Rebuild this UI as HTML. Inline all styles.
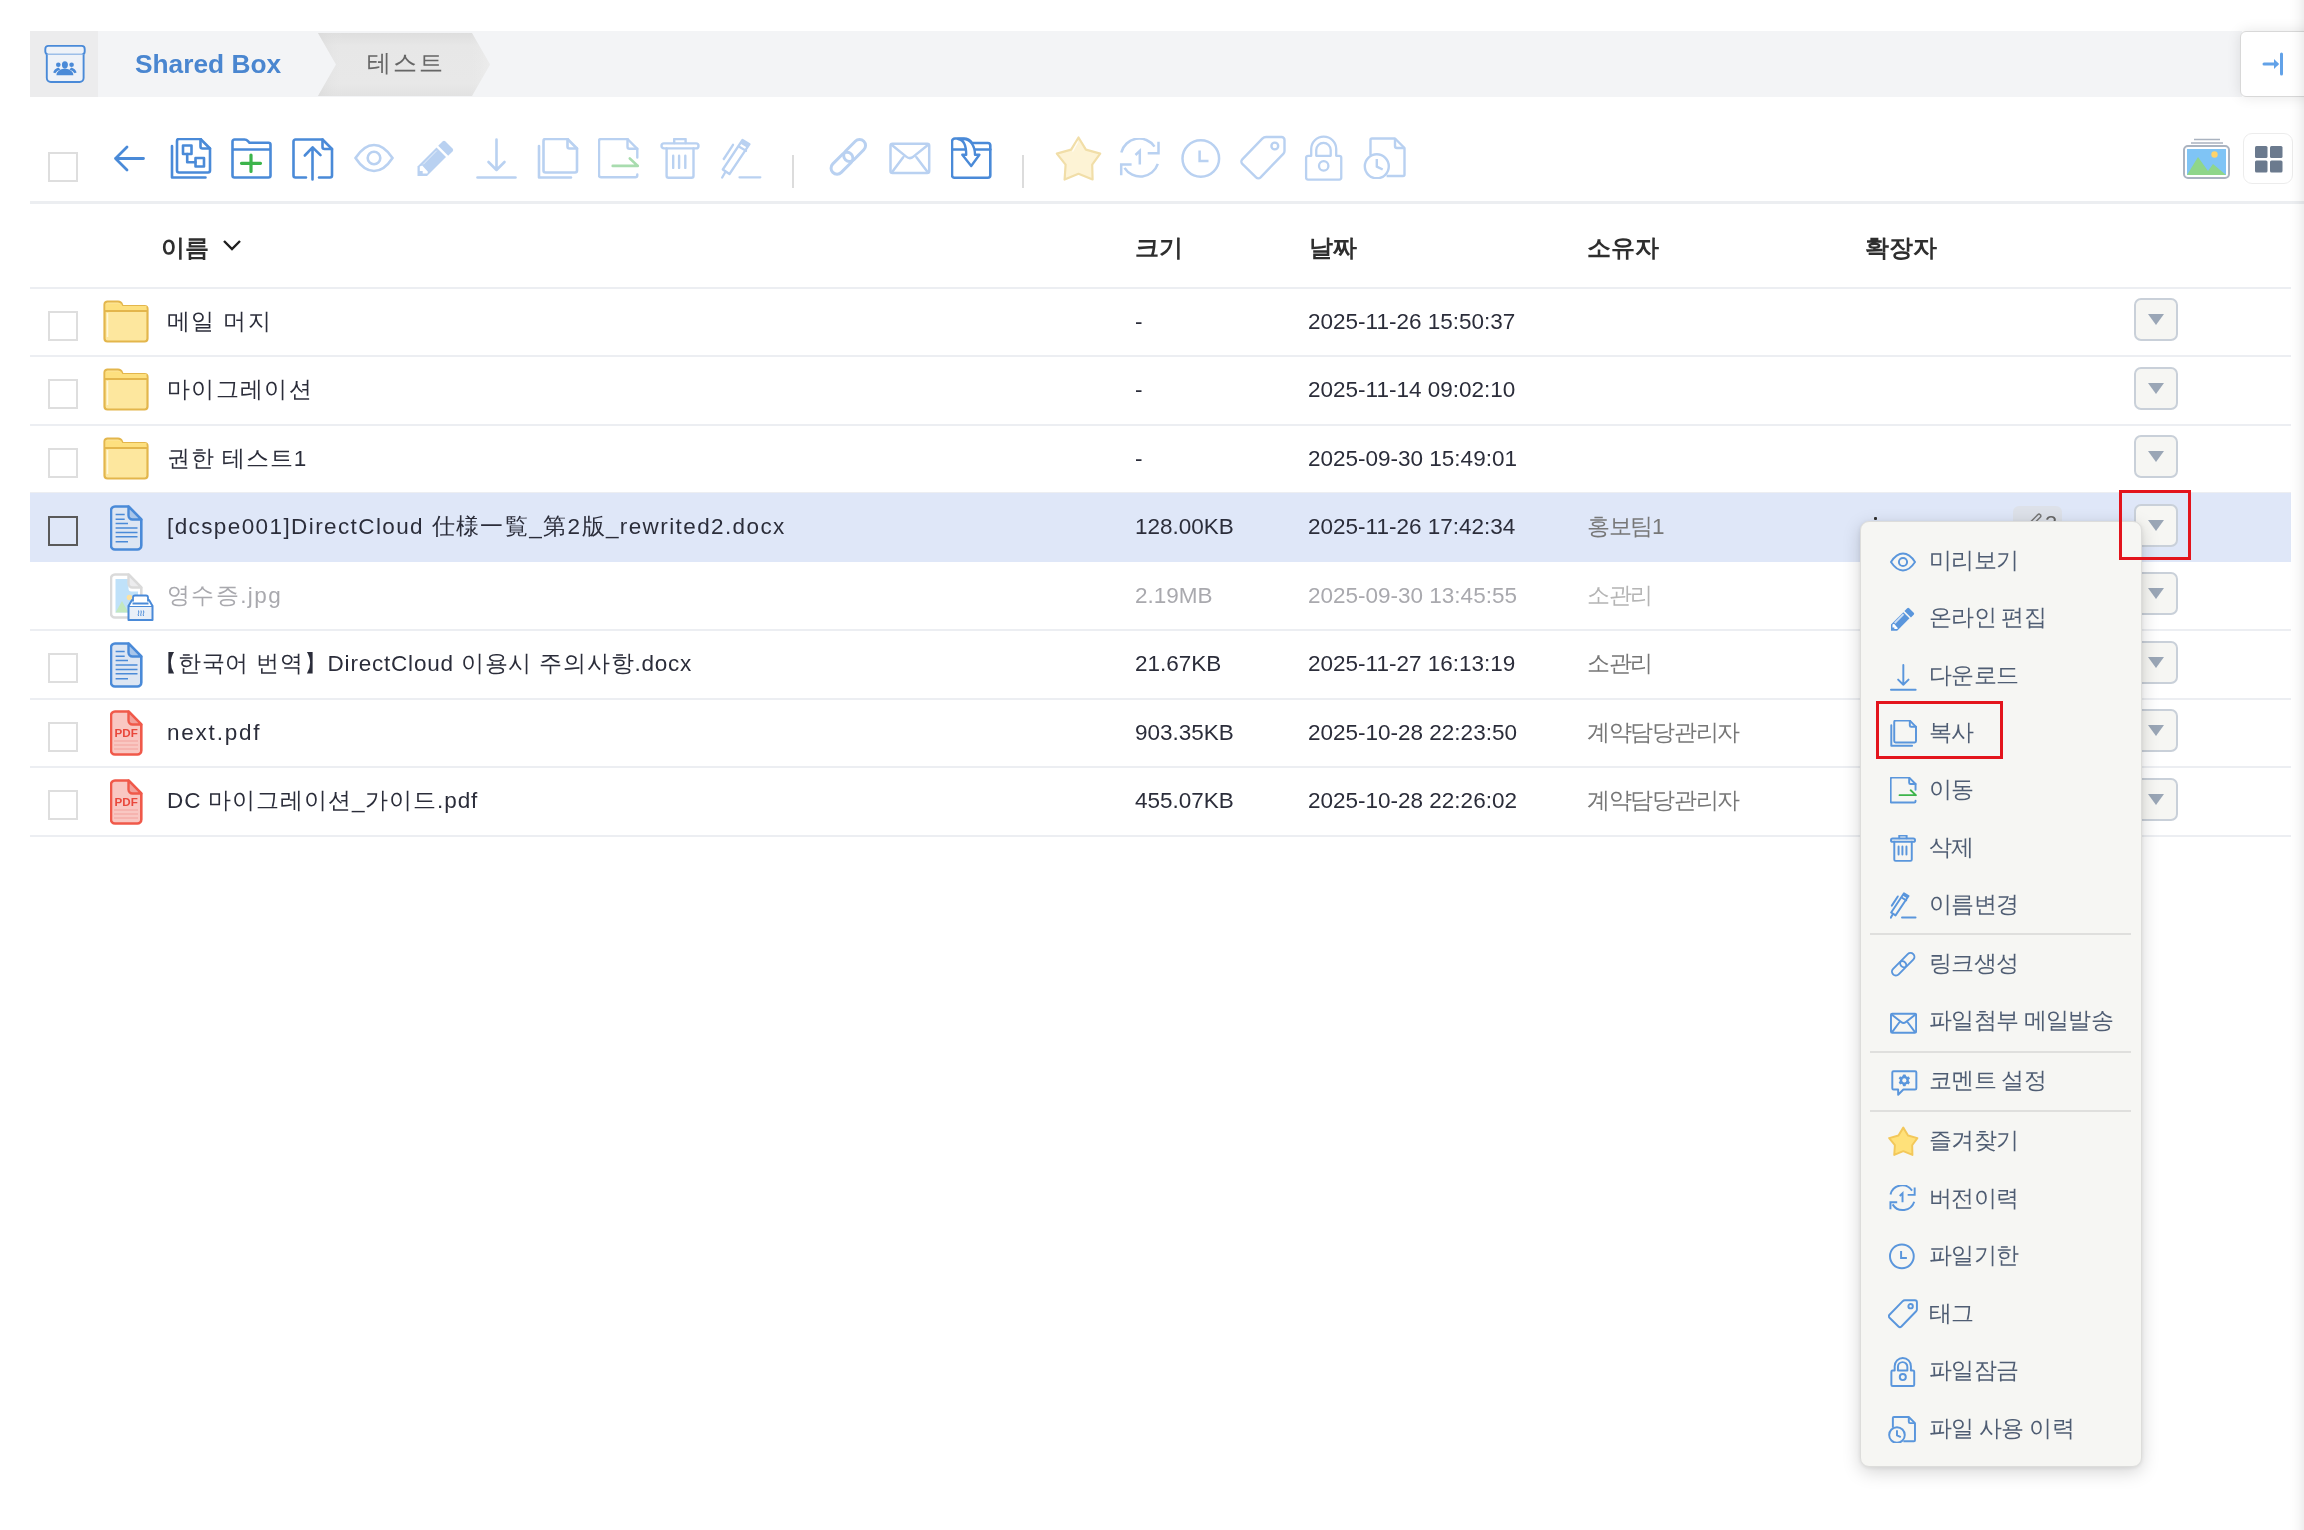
<!DOCTYPE html>
<html><head><meta charset="utf-8">
<style>
html,body{margin:0;padding:0;}
body{width:2304px;height:1530px;position:relative;overflow:hidden;background:#fff;font-family:"Liberation Sans",sans-serif;color:#2b2d3a;}
.a{position:absolute;}
#wrap{position:absolute;left:0;top:0;width:2304px;height:1530px;will-change:transform;}
.t{position:absolute;white-space:nowrap;font-size:22.5px;line-height:30px;}
.rowline{position:absolute;left:30px;width:2261px;height:2px;background:#eceef2;}
.cb{position:absolute;width:26px;height:26px;border:2px solid #dedede;background:#fff;}
.dd{position:absolute;left:2134px;width:40px;height:39px;border:2px solid #c9d0d9;border-radius:7px;background:#f6f6f3;}
.dd::after{content:"";position:absolute;left:12px;top:14px;border-left:8px solid transparent;border-right:8px solid transparent;border-top:11px solid #9aa6b6;}
.mt{position:absolute;left:1929px;font-size:22.5px;line-height:30px;color:#4f5d73;white-space:nowrap;letter-spacing:-0.7px;}
.sep{position:absolute;left:1870px;width:261px;height:2px;background:#dfdfdd;}
.mi [stroke-width]{stroke-width:3px;}
.mi .thin{stroke-width:1.2px;}
.red{position:absolute;border:3.5px solid #e3141c;box-sizing:border-box;}
</style></head>
<body><div id="wrap">
<div class="a" style="left:30px;top:31px;width:2212px;height:66px;background:#f3f4f6"></div>
<div class="a" style="left:30px;top:31px;width:68px;height:66px;background:#ececed"></div>
<svg class="a" style="left:44px;top:44px" width="42" height="40" viewBox="0 0 42 40"><rect x="1.3" y="1.9" width="39.4" height="8.7" rx="3" fill="#eef2f8" stroke="#4a8ad8" stroke-width="1.9"/><path d="M2.8 10.6V34a4 4 0 0 0 4 4H35.6a4 4 0 0 0 4-4V10.6" fill="#eef2f8" stroke="#4a8ad8" stroke-width="1.9"/><ellipse cx="20.9" cy="20.8" rx="3" ry="3.6" fill="#4a8ad8"/><path d="M12.4 31.2Q12.8 25.3 20.9 24.4Q29 25.3 29.4 31.2Z" fill="#4a8ad8"/><circle cx="14.3" cy="20.8" r="2.3" fill="#4a8ad8"/><circle cx="27.6" cy="20.8" r="2.3" fill="#4a8ad8"/><path d="M9.2 28.6Q10 25.2 14.3 23.6L16.5 25.4Q12.8 26.5 11.3 29.2Z M32.6 28.6Q31.8 25.2 27.5 23.6L25.3 25.4Q29 26.5 30.5 29.2Z" fill="#4a8ad8"/></svg>
<div class="t" style="left:135px;top:49px;font-size:26.3px;font-weight:bold;color:#4a86d0">Shared Box</div>
<svg class="a" style="left:318px;top:32.5px" width="174" height="63" viewBox="0 0 174 63"><defs><linearGradient id="bcg" x1="0" y1="0" x2="0" y2="1"><stop offset="0" stop-color="#dedede"/><stop offset="0.2" stop-color="#e7e7e7"/><stop offset="0.8" stop-color="#e8e8e8"/><stop offset="1" stop-color="#e2e2e2"/></linearGradient><linearGradient id="bcg2" x1="0" y1="0" x2="1" y2="0"><stop offset="0" stop-color="#d8d8d8" stop-opacity="0.6"/><stop offset="0.15" stop-color="#e8e8e8" stop-opacity="0"/><stop offset="0.88" stop-color="#e8e8e8" stop-opacity="0"/><stop offset="1" stop-color="#f0f0f0" stop-opacity="0.6"/></linearGradient></defs><path d="M0 0H154L172 31.5L154 63H0L18 31.5Z" fill="url(#bcg)"/><path d="M0 0H154L172 31.5L154 63H0L18 31.5Z" fill="url(#bcg2)"/></svg>
<div class="t" style="left:367px;top:48px;color:#666;font-size:24px;letter-spacing:2px">테스트</div>
<div class="a" style="left:2240px;top:31px;width:80px;height:64px;background:#fff;border:1px solid #d8d8d8;border-radius:6px;box-shadow:0 0 14px rgba(0,0,0,0.10)"></div>
<svg class="a" style="left:2262px;top:52px" width="24" height="24" viewBox="0 0 24 24"><path d="M2 12H15" stroke="#62a2e8" stroke-width="3" stroke-linecap="round"/><path d="M12 7L17 12L12 17Z" fill="#62a2e8"/><path d="M19.5 2V22" stroke="#62a2e8" stroke-width="3" stroke-linecap="round"/></svg>
<div class="cb" style="left:48px;top:152px"></div>
<svg class="a" style="left:112px;top:138px" width="40" height="40" viewBox="0 0 40 40"><g fill="none" stroke="#4a8ad8" stroke-width="2.8" stroke-linecap="round" stroke-linejoin="round"><path d="M3.5 20.5H31.5M15 9L3.5 20.5L15 32"/></g></svg>
<svg class="a" style="left:170px;top:138px" width="42" height="42" viewBox="0 0 42 42"><g fill="none" stroke="#4a8ad8" stroke-width="2.6" stroke-linejoin="round" stroke-linecap="round"><path d="M2 8V39.5H35.5"/><path d="M9 1H30.5L40 10.5V32.5a2 2 0 0 1-2 2H9a2 2 0 0 1-2-2V3a2 2 0 0 1 2-2Z"/><path d="M30.5 1V8.5a2 2 0 0 0 2 2H40"/><rect x="13" y="7.5" width="8.5" height="8.5"/><rect x="25.5" y="20" width="8.5" height="8.5"/><path d="M17.2 16V24.2H25.5"/></g></svg>
<svg class="a" style="left:231px;top:138px" width="42" height="42" viewBox="0 0 42 42"><g fill="none" stroke="#4a8ad8" stroke-width="2.6" stroke-linejoin="round"><path d="M3.5 1.5H13.5Q15.5 1.5 17 3.2L18.5 4.8H37.5a2 2 0 0 1 2 2V37.5a2 2 0 0 1-2 2H3.5a2 2 0 0 1-2-2V3.5a2 2 0 0 1 2-2Z"/><path d="M1.5 11.5H39.5"/></g><path d="M20 17V33.5M10.5 25.3H29.5" stroke="#3cb44b" stroke-width="3.2" stroke-linecap="round"/></svg>
<svg class="a" style="left:292px;top:138px" width="42" height="44" viewBox="0 0 42 44"><g fill="none" stroke="#4a8ad8" stroke-width="2.6" stroke-linejoin="round" stroke-linecap="round"><path d="M14 39.5H3.5a2 2 0 0 1-2-2V3.5a2 2 0 0 1 2-2H30.5L40 11V37.5a2 2 0 0 1-2 2H27"/><path d="M30.5 1.5V9a2 2 0 0 0 2 2H40"/><path d="M20.5 41.5V10M12.8 17.5L20.6 9.3L28.5 17.2"/></g></svg>
<svg class="a" style="left:354px;top:138px" width="40" height="40" viewBox="0 0 40 40"><g fill="none" stroke="#b9d1f1" stroke-width="2.6"><path d="M1.5 20C8 10 14 7 20 7S32 10 38.5 20C32 30 26 33 20 33S8 30 1.5 20Z"/><circle cx="20" cy="20" r="6.3"/></g></svg>
<svg class="a" style="left:416px;top:138px" width="40" height="40" viewBox="0 0 40 40"><path d="M1.5 28.5L20.5 9.5L30 19L11 38H1.5Z" fill="#b9d1f1"/><path d="M22.2 7.8L26.5 3.5Q28 2 29.5 3.5L36.5 10.5Q38 12 36.5 13.5L32.2 17.8Z" fill="#b9d1f1"/><path d="M3.8 28.5L6.2 27.4L11.9 33.7L11.4 35.5H6.7V33.1H3.8Z" fill="#fff"/><path d="M7.2 26.4L20.8 12.6" stroke="#fff" stroke-width="0.9" opacity="0.7"/></svg>
<svg class="a" style="left:476px;top:138px" width="42" height="42" viewBox="0 0 42 42"><g fill="none" stroke="#b9d1f1" stroke-width="2.6" stroke-linecap="round" stroke-linejoin="round"><path d="M20.5 1.5V32M12.5 24L20.5 32L28.5 24"/><path d="M1.5 39.5H39.5"/></g></svg>
<svg class="a" style="left:537px;top:138px" width="42" height="42" viewBox="0 0 42 42"><g fill="none" stroke="#b9d1f1" stroke-width="2.6" stroke-linejoin="round" stroke-linecap="round"><path d="M2 8V39.5H34"/><path d="M8.5 1H30.5L40 10.5V32.5a2 2 0 0 1-2 2H8.5a2 2 0 0 1-2-2V3a2 2 0 0 1 2-2Z"/><path d="M30.5 1V8.5a2 2 0 0 0 2 2H40"/></g></svg>
<svg class="a" style="left:598px;top:138px" width="42" height="42" viewBox="0 0 42 42"><g fill="none" stroke="#b9d1f1" stroke-width="2.4" stroke-linejoin="round" stroke-linecap="round"><path d="M39.3 19.5V10.8L29.5 1H3a2 2 0 0 0-2 2V37.3a2 2 0 0 0 2 2H37.3a2 2 0 0 0 2-2V36.5"/><path d="M29.5 1V8.8a2 2 0 0 0 2 2H39.3"/></g><g fill="none" stroke="#a8dcae" stroke-width="2.6" stroke-linecap="round" stroke-linejoin="round"><path d="M14.7 27.9H39.8M31.8 20.5L39.8 27.9"/></g></svg>
<svg class="a" style="left:660px;top:138px" width="40" height="42" viewBox="0 0 40 42"><g fill="none" stroke="#b9d1f1" stroke-width="2.4" stroke-linecap="round" stroke-linejoin="round"><rect x="1.5" y="5.4" width="37" height="5" rx="2.5"/><path d="M14.2 5V1H25.6V5"/><path d="M6.6 10.5V37.8a2 2 0 0 0 2 2H31.5a2 2 0 0 0 2-2V10.5"/><path d="M13.2 17.8V29.9M19.1 17.8V29.9M25.3 17.8V29.9"/></g></svg>
<svg class="a" style="left:721px;top:138px" width="42" height="42" viewBox="0 0 42 42"><g fill="none" stroke="#b9d1f1" stroke-width="2.3" stroke-linecap="round" stroke-linejoin="round"><path d="M1.8 31.5L21.5 2L28.5 6.2L8.5 36Z"/><path d="M3.8 35L1.2 39.5"/><path d="M2.8 21L12 6.8"/><path d="M17.8 8.5L25 12.8"/><path d="M18.5 39.3H39.3"/></g><path d="M21.5 2L28.5 6.2L26.3 9.8L19.3 5.5Z" fill="#b9d1f1"/></svg>
<div class="a" style="left:792px;top:155px;width:2px;height:33px;background:#dcdcdc"></div>
<svg class="a" style="left:828px;top:138px" width="42" height="42" viewBox="0 0 42 42"><g fill="none" stroke="#b9d1f1" stroke-width="3"><rect x="13.6" y="6.5" width="26" height="12" rx="6" transform="rotate(-45 26.6 12.5)"/><rect x="1" y="19.2" width="26" height="12" rx="6" transform="rotate(-45 14 25.2)"/></g></svg>
<svg class="a" style="left:889px;top:138px" width="42" height="42" viewBox="0 0 42 42"><g fill="none" stroke="#b9d1f1" stroke-width="2.5" stroke-linejoin="round" stroke-linecap="round"><rect x="1.5" y="5.7" width="38.7" height="29.3" rx="2"/><path d="M2.5 6.8L17.2 18.6Q20.8 21.6 24.4 18.6L39.2 6.8M14.2 19.2L3.5 33.6M27.4 19.2L38.2 33.6"/></g></svg>
<svg class="a" style="left:951px;top:137px" width="42" height="43" viewBox="0 0 42 43"><g fill="none" stroke="#4a8ad8" stroke-width="2.6" stroke-linejoin="round" stroke-linecap="round"><path d="M3.5 40.7a2.5 2.5 0 0 1-2.5-2.5V4.5a3 3 0 0 1 3-3H13Q18 1.5 21 6H36.8a2.5 2.5 0 0 1 2.5 2.5V38.2a2.5 2.5 0 0 1-2.5 2.5Z"/><path d="M1 12.5H39.3"/></g><path d="M7 2C12 2.5 15.2 8 15.2 17.8H11.3L20.2 29L28.4 17.8H24C24 9 19.5 2 12.5 2Z" fill="#fff" stroke="#4a8ad8" stroke-width="2.4" stroke-linejoin="round"/></svg>
<div class="a" style="left:1022px;top:155px;width:2px;height:33px;background:#dcdcdc"></div>
<svg class="a" style="left:1055px;top:135px" width="48" height="48" viewBox="0 0 48 48"><path d="M23.5 2.5L30.9 14.6L45.2 18.6L37.2 29.6L37.6 44.5L23.5 38.8L9.6 44.5L10.6 29.6L1.8 18.6L16.1 14.6Z" fill="#fdf3d5" stroke="#f1dea8" stroke-width="2.2" stroke-linejoin="round"/><path d="M17.5 16.5L23 6.5" stroke="#fff" stroke-width="1.2" opacity="0.8"/></svg>
<svg class="a" style="left:1119px;top:138px" width="42" height="42" viewBox="0 0 42 42"><g fill="none" stroke="#b9d1f1" stroke-width="2.5" stroke-linejoin="miter"><path d="M2.3 14.5A18.5 18.5 0 0 1 35.5 8.6"/><path d="M38.8 25.8A18.5 18.5 0 0 1 5.5 29.8"/><path d="M39.5 3.7V15.2H28.7"/><path d="M2.2 37.3V26.4H12.6"/><path d="M16.5 17L20.8 12.9V26.4"/></g></svg>
<svg class="a" style="left:1181px;top:138px" width="42" height="42" viewBox="0 0 42 42"><g fill="none" stroke="#b9d1f1" stroke-width="2.5" stroke-linecap="butt" stroke-linejoin="miter"><circle cx="19.8" cy="20.5" r="18.3"/><path d="M18.6 12.5V23H27.5"/></g></svg>
<svg class="a" style="left:1240px;top:135px" width="46" height="46" viewBox="0 0 46 46"><g fill="none" stroke="#b9d1f1" stroke-width="2.4" stroke-linejoin="round"><path d="M26.5 2H41.5a3 3 0 0 1 3 3V16a4 4 0 0 1-1.2 2.8L20.6 42.3a3.2 3.2 0 0 1-4.5 0L2.3 28.8a3.2 3.2 0 0 1 0-4.5L22.3 3.6A5.5 5.5 0 0 1 26.5 2Z"/><circle cx="34.8" cy="11" r="3.4"/></g></svg>
<svg class="a" style="left:1304px;top:135px" width="40" height="46" viewBox="0 0 40 46"><g fill="none" stroke="#b9d1f1" stroke-width="2.3" stroke-linejoin="round"><path d="M7.2 20.8H4.1a2 2 0 0 0-2 2V42.6a2 2 0 0 0 2 2H35.25a2 2 0 0 0 2-2V22.8a2 2 0 0 0-2-2H32.2V14.1A12.5 12.5 0 0 0 7.2 14.1Z"/><path d="M12.25 20.8V15.1A7.2 7.2 0 0 1 26.7 15.1V20.8Z"/><circle cx="19.7" cy="30.9" r="4.7"/></g></svg>
<svg class="a" style="left:1363px;top:137px" width="44" height="42" viewBox="0 0 44 42"><g fill="none" stroke="#b9d1f1" stroke-width="2.4" stroke-linejoin="round" stroke-linecap="butt"><path d="M7.5 18V3a1.5 1.5 0 0 1 1.5-1.5H32L41.5 11V37.5a1.5 1.5 0 0 1-1.5 1.5H23.6"/><path d="M32 1.5V9a2 2 0 0 0 2 2H41.5"/><circle cx="13.8" cy="29.3" r="12" fill="#fff"/><path d="M13.8 21.9V29.7L19.7 32.5"/></g></svg>
<svg class="a" style="left:2182px;top:136px" width="50" height="45" viewBox="0 0 50 45"><path d="M12 3.5H38M9 7H41" stroke="#aab3c0" stroke-width="1.6"/><rect x="2" y="10" width="45" height="32" rx="4" fill="#fff" stroke="#aab3c0" stroke-width="2"/><rect x="5" y="13" width="39" height="26" fill="#7fc4f5"/><path d="M5 39L16 21L26 35L31 28L44 39Z" fill="#8fd68a"/><circle cx="32.5" cy="18.5" r="3.2" fill="#ffd36a"/></svg>
<div class="a" style="left:2243px;top:133px;width:48px;height:49px;border:1.5px solid #ececec;border-radius:9px;background:#fff"></div>
<svg class="a" style="left:2255px;top:146px" width="29" height="28" viewBox="0 0 29 28"><rect x="0" y="0" width="12.5" height="12" rx="1.5" fill="#6b7a8e"/><rect x="15" y="0" width="12.5" height="12" rx="1.5" fill="#6b7a8e"/><rect x="0" y="14.5" width="12.5" height="12" rx="1.5" fill="#6b7a8e"/><rect x="15" y="14.5" width="12.5" height="12" rx="1.5" fill="#6b7a8e"/></svg>
<div class="a" style="left:30px;top:201px;width:2274px;height:3px;background:#eceef1"></div>
<div class="t" style="left:161px;top:233px;font-weight:bold;color:#2e2e2e;font-size:24px">이름</div>
<div class="t" style="left:1135px;top:233px;font-weight:bold;color:#2e2e2e;font-size:24px">크기</div>
<div class="t" style="left:1309px;top:233px;font-weight:bold;color:#2e2e2e;font-size:24px">날짜</div>
<div class="t" style="left:1587px;top:233px;font-weight:bold;color:#2e2e2e;font-size:24px">소유자</div>
<div class="t" style="left:1865px;top:233px;font-weight:bold;color:#2e2e2e;font-size:24px">확장자</div>
<svg class="a" style="left:222px;top:239px" width="20" height="14" viewBox="0 0 20 14"><path d="M2 2L10 10L18 2" fill="none" stroke="#1e1e1e" stroke-width="2.4"/></svg>
<div class="rowline" style="top:286.5px"></div>
<div class="rowline" style="top:355.0px"></div>
<div class="cb" style="left:48px;top:310.75px;border-color:#dedede;background:#fff"></div>
<svg class="a" style="left:103px;top:299.75px" width="46" height="43" viewBox="0 0 46 43"><path d="M4 1.5H15Q18 1.5 19 4.5L19.5 6H41.5a3 3 0 0 1 3 3V38.5a3 3 0 0 1-3 3H4.5a3 3 0 0 1-3-3V4.5a3 3 0 0 1 3-3Z" fill="#fde79e" stroke="#e3b64c" stroke-width="2.2" stroke-linejoin="round"/><path d="M2.5 3.5H18L19.5 6H43.5V10.5H2.5Z" fill="#fde07f"/><path d="M1.5 11H44.5" stroke="#e3b64c" stroke-width="2"/><path d="M4.5 13V37" stroke="#fff7d8" stroke-width="1.5"/></svg>
<div class="t" style="left:167px;top:306.95px;color:#2b2d3a;letter-spacing:1.4px">메일 머지</div>
<div class="t" style="left:1135px;top:306.95px;color:#2b2d3a">-</div>
<div class="t" style="left:1308px;top:306.95px;color:#2b2d3a">2025-11-26 15:50:37</div>
<div class="dd" style="top:298.25px"></div>
<div class="rowline" style="top:423.5px"></div>
<div class="cb" style="left:48px;top:379.25px;border-color:#dedede;background:#fff"></div>
<svg class="a" style="left:103px;top:368.25px" width="46" height="43" viewBox="0 0 46 43"><path d="M4 1.5H15Q18 1.5 19 4.5L19.5 6H41.5a3 3 0 0 1 3 3V38.5a3 3 0 0 1-3 3H4.5a3 3 0 0 1-3-3V4.5a3 3 0 0 1 3-3Z" fill="#fde79e" stroke="#e3b64c" stroke-width="2.2" stroke-linejoin="round"/><path d="M2.5 3.5H18L19.5 6H43.5V10.5H2.5Z" fill="#fde07f"/><path d="M1.5 11H44.5" stroke="#e3b64c" stroke-width="2"/><path d="M4.5 13V37" stroke="#fff7d8" stroke-width="1.5"/></svg>
<div class="t" style="left:167px;top:375.45px;color:#2b2d3a;letter-spacing:1.32px">마이그레이션</div>
<div class="t" style="left:1135px;top:375.45px;color:#2b2d3a">-</div>
<div class="t" style="left:1308px;top:375.45px;color:#2b2d3a">2025-11-14 09:02:10</div>
<div class="dd" style="top:366.75px"></div>
<div class="rowline" style="top:492.0px"></div>
<div class="cb" style="left:48px;top:447.75px;border-color:#dedede;background:#fff"></div>
<svg class="a" style="left:103px;top:436.75px" width="46" height="43" viewBox="0 0 46 43"><path d="M4 1.5H15Q18 1.5 19 4.5L19.5 6H41.5a3 3 0 0 1 3 3V38.5a3 3 0 0 1-3 3H4.5a3 3 0 0 1-3-3V4.5a3 3 0 0 1 3-3Z" fill="#fde79e" stroke="#e3b64c" stroke-width="2.2" stroke-linejoin="round"/><path d="M2.5 3.5H18L19.5 6H43.5V10.5H2.5Z" fill="#fde07f"/><path d="M1.5 11H44.5" stroke="#e3b64c" stroke-width="2"/><path d="M4.5 13V37" stroke="#fff7d8" stroke-width="1.5"/></svg>
<div class="t" style="left:167px;top:443.95px;color:#2b2d3a;letter-spacing:0.9px">권한 테스트1</div>
<div class="t" style="left:1135px;top:443.95px;color:#2b2d3a">-</div>
<div class="t" style="left:1308px;top:443.95px;color:#2b2d3a">2025-09-30 15:49:01</div>
<div class="dd" style="top:435.25px"></div>
<div class="a" style="left:30px;top:492.5px;width:2261px;height:69.5px;background:#dfe7f8"></div>
<div class="cb" style="left:48px;top:516.25px;border-color:#5a5a5a;background:transparent"></div>
<svg class="a" style="left:109.5px;top:504.75px" width="34" height="46" viewBox="0 0 34 46"><path d="M5 1.5H18.5L31.3 14.5V40.5a4 4 0 0 1-4 4H5a4 4 0 0 1-4-4V5.5a4 4 0 0 1 4-4Z" fill="#dde6f3" stroke="#4a8ad8" stroke-width="2.6" stroke-linejoin="round"/><path d="M18.5 1.5V10.5a4 4 0 0 0 4 4H31.3Z" fill="#a9c6ea" stroke="#4a8ad8" stroke-width="2.4" stroke-linejoin="round"/><path d="M5.6 9.5H14.7M5.6 14.2H14.7M5.6 18.5H18M5.6 23.1H27.5M5.6 27.5H27.5M5.6 31.8H27.5M5.6 36.8H18" stroke="#4a8ad8" stroke-width="1.5"/></svg>
<div class="t" style="left:167px;top:512.45px;color:#2b2d3a;letter-spacing:1.4px">[dcspe001]DirectCloud 仕様一覧_第2版_rewrited2.docx</div>
<div class="t" style="left:1135px;top:512.45px;color:#2b2d3a">128.00KB</div>
<div class="t" style="left:1308px;top:512.45px;color:#2b2d3a">2025-11-26 17:42:34</div>
<div class="t" style="left:1587px;top:512.45px;color:#777;letter-spacing:-1.3px">홍보팀1</div>
<div class="dd" style="top:503.75px"></div>
<div class="rowline" style="top:629.0px"></div>
<svg class="a" style="left:109.5px;top:573.25px" width="44" height="48" viewBox="0 0 44 48"><path d="M5 1.5H18.5L31.3 14.5V40.5a4 4 0 0 1-4 4H5a4 4 0 0 1-4-4V5.5a4 4 0 0 1 4-4Z" fill="#fff" stroke="#dadada" stroke-width="2.6" stroke-linejoin="round"/><path d="M5.5 6H18.5V15.5a3 3 0 0 0 3 3H28V39.5H5.5Z" fill="#bfe1f9"/><path d="M18.5 1.5V10.5a4 4 0 0 0 4 4H31.3Z" fill="#ececee" stroke="#dadada" stroke-width="2.4" stroke-linejoin="round"/><path d="M5.5 39.5L12 28L18.5 39.5Z" fill="#c3e8bf"/><circle cx="19.5" cy="24.5" r="2.8" fill="#fde2a0"/><path d="M18.5 33H42.5V47H18.5Z" fill="#e9eff8" stroke="#4a8ad8" stroke-width="2" stroke-linejoin="round"/><path d="M18.5 33L22 27H39L42.5 33" fill="#fff" stroke="#4a8ad8" stroke-width="2" stroke-linejoin="round"/><path d="M23 28.5V24.5a2 2 0 0 1 2-2H36a2 2 0 0 1 2 2V28.5M22.5 30.5H38.5" fill="#fff" stroke="#4a8ad8" stroke-width="1.8"/><path d="M28.5 43C27.5 41 29.5 40 28.5 37.5M31 43C30 41 32 40 31 37.5M33.5 43C32.5 41 34.5 40 33.5 37.5" fill="none" stroke="#4a8ad8" stroke-width="1"/></svg>
<div class="t" style="left:167px;top:580.95px;color:#a9a9ae;letter-spacing:1.4px">영수증.jpg</div>
<div class="t" style="left:1135px;top:580.95px;color:#a9a9ae">2.19MB</div>
<div class="t" style="left:1308px;top:580.95px;color:#a9a9ae">2025-09-30 13:45:55</div>
<div class="t" style="left:1587px;top:580.95px;color:#b5b5b5;letter-spacing:-1.3px">소관리</div>
<div class="dd" style="top:572.25px"></div>
<div class="rowline" style="top:697.5px"></div>
<div class="cb" style="left:48px;top:653.25px;border-color:#dedede;background:#fff"></div>
<svg class="a" style="left:109.5px;top:641.75px" width="34" height="46" viewBox="0 0 34 46"><path d="M5 1.5H18.5L31.3 14.5V40.5a4 4 0 0 1-4 4H5a4 4 0 0 1-4-4V5.5a4 4 0 0 1 4-4Z" fill="#dde6f3" stroke="#4a8ad8" stroke-width="2.6" stroke-linejoin="round"/><path d="M18.5 1.5V10.5a4 4 0 0 0 4 4H31.3Z" fill="#a9c6ea" stroke="#4a8ad8" stroke-width="2.4" stroke-linejoin="round"/><path d="M5.6 9.5H14.7M5.6 14.2H14.7M5.6 18.5H18M5.6 23.1H27.5M5.6 27.5H27.5M5.6 31.8H27.5M5.6 36.8H18" stroke="#4a8ad8" stroke-width="1.5"/></svg>
<div class="t" style="left:154px;top:649.45px;color:#2b2d3a;letter-spacing:0.79px">【한국어 번역】DirectCloud 이용시 주의사항.docx</div>
<div class="t" style="left:1135px;top:649.45px;color:#2b2d3a">21.67KB</div>
<div class="t" style="left:1308px;top:649.45px;color:#2b2d3a">2025-11-27 16:13:19</div>
<div class="t" style="left:1587px;top:649.45px;color:#777;letter-spacing:-1.3px">소관리</div>
<div class="dd" style="top:640.75px"></div>
<div class="rowline" style="top:766.0px"></div>
<div class="cb" style="left:48px;top:721.75px;border-color:#dedede;background:#fff"></div>
<svg class="a" style="left:109.5px;top:710.25px" width="34" height="46" viewBox="0 0 34 46"><path d="M5 1.5H18.5L31.3 14.5V40.5a4 4 0 0 1-4 4H5a4 4 0 0 1-4-4V5.5a4 4 0 0 1 4-4Z" fill="#f9c7c2" stroke="#f0594a" stroke-width="2.6" stroke-linejoin="round"/><path d="M18.5 1.5V10.5a4 4 0 0 0 4 4H31.3Z" fill="#f2a09a" stroke="#f0594a" stroke-width="2.4" stroke-linejoin="round"/><path d="M4 31H28M4 35H28M4 39H28" stroke="#f4a29b" stroke-width="1.1"/><text x="16.2" y="27.3" font-family="Liberation Sans" font-weight="bold" font-size="11.6" fill="#e9473b" text-anchor="middle">PDF</text></svg>
<div class="t" style="left:167px;top:717.95px;color:#2b2d3a;letter-spacing:1.78px">next.pdf</div>
<div class="t" style="left:1135px;top:717.95px;color:#2b2d3a">903.35KB</div>
<div class="t" style="left:1308px;top:717.95px;color:#2b2d3a">2025-10-28 22:23:50</div>
<div class="t" style="left:1587px;top:717.95px;color:#777;letter-spacing:-1.3px">계약담당관리자</div>
<div class="dd" style="top:709.25px"></div>
<div class="rowline" style="top:834.5px"></div>
<div class="cb" style="left:48px;top:790.25px;border-color:#dedede;background:#fff"></div>
<svg class="a" style="left:109.5px;top:778.75px" width="34" height="46" viewBox="0 0 34 46"><path d="M5 1.5H18.5L31.3 14.5V40.5a4 4 0 0 1-4 4H5a4 4 0 0 1-4-4V5.5a4 4 0 0 1 4-4Z" fill="#f9c7c2" stroke="#f0594a" stroke-width="2.6" stroke-linejoin="round"/><path d="M18.5 1.5V10.5a4 4 0 0 0 4 4H31.3Z" fill="#f2a09a" stroke="#f0594a" stroke-width="2.4" stroke-linejoin="round"/><path d="M4 31H28M4 35H28M4 39H28" stroke="#f4a29b" stroke-width="1.1"/><text x="16.2" y="27.3" font-family="Liberation Sans" font-weight="bold" font-size="11.6" fill="#e9473b" text-anchor="middle">PDF</text></svg>
<div class="t" style="left:167px;top:786.45px;color:#2b2d3a;letter-spacing:0.91px">DC 마이그레이션_가이드.pdf</div>
<div class="t" style="left:1135px;top:786.45px;color:#2b2d3a">455.07KB</div>
<div class="t" style="left:1308px;top:786.45px;color:#2b2d3a">2025-10-28 22:26:02</div>
<div class="t" style="left:1587px;top:786.45px;color:#777;letter-spacing:-1.3px">계약담당관리자</div>
<div class="dd" style="top:777.75px"></div>
<div class="a" style="left:2013px;top:506px;width:49px;height:30px;border-radius:6px;background:#dde1e9"></div>
<div class="t" style="left:2045px;top:509px;color:#666;font-size:22px">3</div>
<svg class="a" style="left:2024px;top:513px" width="18" height="18" viewBox="0 0 18 18"><path d="M3 15L15 3" stroke="#777" stroke-width="5" stroke-linecap="round" fill="none"/><path d="M3 15L15 3" stroke="#dde1e9" stroke-width="2" stroke-linecap="round" fill="none"/></svg>
<div class="a" style="left:1874px;top:517px;width:3px;height:3px;background:#333;border-radius:1px"></div>
<div class="a" style="left:2304px;top:-60px;width:40px;height:1650px;box-shadow:0 0 16px rgba(0,0,0,0.13)"></div>
<div class="a" style="left:1860px;top:520.5px;width:280px;height:944px;background:#f6f6f3;border:1px solid #dddddb;border-radius:9px;box-shadow:0 5px 18px rgba(0,0,0,0.17),0 1px 4px rgba(0,0,0,0.08)"></div>
<svg class="a mi" style="left:1890px;top:548.5px" width="26.0" height="26.0" viewBox="0 0 40 40"><g fill="none" stroke="#5a96dc" stroke-width="2.6"><path d="M1.5 20C8 10 14 7 20 7S32 10 38.5 20C32 30 26 33 20 33S8 30 1.5 20Z"/><circle cx="20" cy="20" r="6.3"/></g></svg>
<div class="mt" style="top:546.0px">미리보기</div>
<svg class="a mi" style="left:1890px;top:605.8px" width="26.0" height="26.0" viewBox="0 0 40 40"><path d="M1.5 28.5L20.5 9.5L30 19L11 38H1.5Z" fill="#5a96dc"/><path d="M22.2 7.8L26.5 3.5Q28 2 29.5 3.5L36.5 10.5Q38 12 36.5 13.5L32.2 17.8Z" fill="#5a96dc"/><path d="M3.8 28.5L6.2 27.4L11.9 33.7L11.4 35.5H6.7V33.1H3.8Z" fill="#fff"/><path d="M7.2 26.4L20.8 12.6" stroke="#fff" stroke-width="0.9" opacity="0.7"/></svg>
<div class="mt" style="top:603.3px">온라인 편집</div>
<svg class="a mi" style="left:1890px;top:663.6px" width="27.3" height="27.3" viewBox="0 0 42 42"><g fill="none" stroke="#5a96dc" stroke-width="2.6" stroke-linecap="round" stroke-linejoin="round"><path d="M20.5 1.5V32M12.5 24L20.5 32L28.5 24"/><path d="M1.5 39.5H39.5"/></g></svg>
<div class="mt" style="top:660.7px">다운로드</div>
<svg class="a mi" style="left:1890px;top:719.9px" width="27.3" height="27.3" viewBox="0 0 42 42"><g fill="none" stroke="#5a96dc" stroke-width="2.6" stroke-linejoin="round" stroke-linecap="round"><path d="M2 8V39.5H34"/><path d="M8.5 1H30.5L40 10.5V32.5a2 2 0 0 1-2 2H8.5a2 2 0 0 1-2-2V3a2 2 0 0 1 2-2Z"/><path d="M30.5 1V8.5a2 2 0 0 0 2 2H40"/></g></svg>
<div class="mt" style="top:718.0px">복사</div>
<svg class="a mi" style="left:1890px;top:777.2px" width="27.3" height="27.3" viewBox="0 0 42 42"><g fill="none" stroke="#5a96dc" stroke-width="2.4" stroke-linejoin="round" stroke-linecap="round"><path d="M39.3 19.5V10.8L29.5 1H3a2 2 0 0 0-2 2V37.3a2 2 0 0 0 2 2H37.3a2 2 0 0 0 2-2V36.5"/><path d="M29.5 1V8.8a2 2 0 0 0 2 2H39.3"/></g><g fill="none" stroke="#3cb44b" stroke-width="2.6" stroke-linecap="round" stroke-linejoin="round"><path d="M14.7 27.9H39.8M31.8 20.5L39.8 27.9"/></g></svg>
<div class="mt" style="top:775.4px">이동</div>
<svg class="a mi" style="left:1890px;top:834.6px" width="26.0" height="27.3" viewBox="0 0 40 42"><g fill="none" stroke="#5a96dc" stroke-width="2.4" stroke-linecap="round" stroke-linejoin="round"><rect x="1.5" y="5.4" width="37" height="5" rx="2.5"/><path d="M14.2 5V1H25.6V5"/><path d="M6.6 10.5V37.8a2 2 0 0 0 2 2H31.5a2 2 0 0 0 2-2V10.5"/><path d="M13.2 17.8V29.9M19.1 17.8V29.9M25.3 17.8V29.9"/></g></svg>
<div class="mt" style="top:832.7px">삭제</div>
<svg class="a mi" style="left:1890px;top:892.0px" width="27.3" height="27.3" viewBox="0 0 42 42"><g fill="none" stroke="#5a96dc" stroke-width="2.3" stroke-linecap="round" stroke-linejoin="round"><path d="M1.8 31.5L21.5 2L28.5 6.2L8.5 36Z"/><path d="M3.8 35L1.2 39.5"/><path d="M2.8 21L12 6.8"/><path d="M17.8 8.5L25 12.8"/><path d="M18.5 39.3H39.3"/></g><path d="M21.5 2L28.5 6.2L26.3 9.8L19.3 5.5Z" fill="#5a96dc"/></svg>
<div class="mt" style="top:890.1px">이름변경</div>
<svg class="a mi" style="left:1889.5px;top:952.1px" width="27.3" height="27.3" viewBox="0 0 42 42"><g fill="none" stroke="#5a96dc" stroke-width="3"><rect x="13.6" y="6.5" width="26" height="12" rx="6" transform="rotate(-45 26.6 12.5)"/><rect x="1" y="19.2" width="26" height="12" rx="6" transform="rotate(-45 14 25.2)"/></g></svg>
<div class="mt" style="top:948.7px">링크생성</div>
<svg class="a mi" style="left:1890px;top:1010.1px" width="27.3" height="27.3" viewBox="0 0 42 42"><g fill="none" stroke="#5a96dc" stroke-width="2.5" stroke-linejoin="round" stroke-linecap="round"><rect x="1.5" y="5.7" width="38.7" height="29.3" rx="2"/><path d="M2.5 6.8L17.2 18.6Q20.8 21.6 24.4 18.6L39.2 6.8M14.2 19.2L3.5 33.6M27.4 19.2L38.2 33.6"/></g></svg>
<div class="mt" style="top:1006.2px">파일첨부 메일발송</div>
<svg class="a mi" style="left:1890.5px;top:1069.8px" width="27.3" height="27.3" viewBox="0 0 42 42"><g fill="none" stroke="#5a96dc" stroke-width="2.6" stroke-linejoin="round"><path d="M4 2H37a2 2 0 0 1 2 2V28a2 2 0 0 1-2 2H19L11 38V30H4a2 2 0 0 1-2-2V4a2 2 0 0 1 2-2Z"/></g><g fill="#5a96dc"><circle cx="20.5" cy="16" r="7"/><rect x="18.2" y="7" width="4.6" height="18" rx="1"/><rect x="18.2" y="7" width="4.6" height="18" rx="1" transform="rotate(60 20.5 16)"/><rect x="18.2" y="7" width="4.6" height="18" rx="1" transform="rotate(120 20.5 16)"/></g><circle cx="20.5" cy="16" r="3.2" fill="#f6f6f3"/></svg>
<div class="mt" style="top:1065.5px">코멘트 설정</div>
<svg class="a mi" style="left:1888px;top:1126.4px" width="31.2" height="31.2" viewBox="0 0 48 48"><path d="M23.5 2.5L30.9 14.6L45.2 18.6L37.2 29.6L37.6 44.5L23.5 38.8L9.6 44.5L10.6 29.6L1.8 18.6L16.1 14.6Z" fill="#ffe17a" stroke="#f3c85a" stroke-width="2.2" stroke-linejoin="round"/></svg>
<div class="mt" style="top:1125.5px">즐겨찾기</div>
<svg class="a mi" style="left:1889px;top:1185.3px" width="27.3" height="27.3" viewBox="0 0 42 42"><g fill="none" stroke="#5a96dc" stroke-width="2.5" stroke-linejoin="miter"><path d="M2.3 14.5A18.5 18.5 0 0 1 35.5 8.6"/><path d="M38.8 25.8A18.5 18.5 0 0 1 5.5 29.8"/><path d="M39.5 3.7V15.2H28.7"/><path d="M2.2 37.3V26.4H12.6"/><path d="M16.5 17L20.8 12.9V26.4"/></g></svg>
<div class="mt" style="top:1183.5px">버전이력</div>
<svg class="a mi" style="left:1889px;top:1242.9px" width="27.3" height="27.3" viewBox="0 0 42 42"><g fill="none" stroke="#5a96dc" stroke-width="2.5" stroke-linecap="butt" stroke-linejoin="miter"><circle cx="19.8" cy="20.5" r="18.3"/><path d="M18.6 12.5V23H27.5"/></g></svg>
<div class="mt" style="top:1241.1px">파일기한</div>
<svg class="a mi" style="left:1888px;top:1299.0px" width="29.9" height="29.9" viewBox="0 0 46 46"><g fill="none" stroke="#5a96dc" stroke-width="2.4" stroke-linejoin="round"><path d="M26.5 2H41.5a3 3 0 0 1 3 3V16a4 4 0 0 1-1.2 2.8L20.6 42.3a3.2 3.2 0 0 1-4.5 0L2.3 28.8a3.2 3.2 0 0 1 0-4.5L22.3 3.6A5.5 5.5 0 0 1 26.5 2Z"/><circle cx="34.8" cy="11" r="3.4"/></g></svg>
<div class="mt" style="top:1298.5px">태그</div>
<svg class="a mi" style="left:1890px;top:1356.8px" width="26.0" height="29.9" viewBox="0 0 40 46"><g fill="none" stroke="#5a96dc" stroke-width="2.3" stroke-linejoin="round"><path d="M7.2 20.8H4.1a2 2 0 0 0-2 2V42.6a2 2 0 0 0 2 2H35.25a2 2 0 0 0 2-2V22.8a2 2 0 0 0-2-2H32.2V14.1A12.5 12.5 0 0 0 7.2 14.1Z"/><path d="M12.25 20.8V15.1A7.2 7.2 0 0 1 26.7 15.1V20.8Z"/><circle cx="19.7" cy="30.9" r="4.7"/></g></svg>
<div class="mt" style="top:1356.2px">파일잠금</div>
<svg class="a mi" style="left:1888px;top:1415.6px" width="28.6" height="27.3" viewBox="0 0 44 42"><g fill="none" stroke="#5a96dc" stroke-width="2.4" stroke-linejoin="round" stroke-linecap="butt"><path d="M7.5 18V3a1.5 1.5 0 0 1 1.5-1.5H32L41.5 11V37.5a1.5 1.5 0 0 1-1.5 1.5H23.6"/><path d="M32 1.5V9a2 2 0 0 0 2 2H41.5"/><circle cx="13.8" cy="29.3" r="12" fill="#f6f6f3"/><path d="M13.8 21.9V29.7L19.7 32.5"/></g></svg>
<div class="mt" style="top:1413.8px">파일 사용 이력</div>
<div class="sep" style="top:933.4px"></div>
<div class="sep" style="top:1050.6px"></div>
<div class="sep" style="top:1110.0px"></div>
<div class="red" style="left:2119px;top:490px;width:72px;height:70px"></div>
<div class="red" style="left:1876px;top:701px;width:127px;height:58px"></div>
</div></body></html>
